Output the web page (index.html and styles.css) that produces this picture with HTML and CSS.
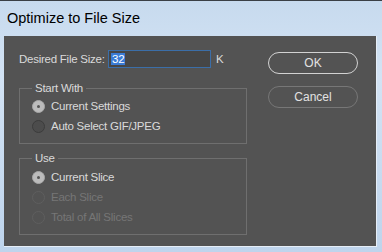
FILE: index.html
```html
<!DOCTYPE html>
<html lang="en">
<head>
    <meta charset="UTF-8">
    <title>Optimize to File Size</title>
    <link rel="stylesheet" href="styles.css">
</head>
<body>
    <div class="window">
        <div class="titlebar">Optimize to File Size</div>

        <div class="panel">
            <div class="main">
                <div class="size-row">
                    <label for="file_size">Desired File Size:</label>
                    <div class="size-input" id="file_size"><span class="selected">32</span></div>
                    <span class="unit">K</span>
                </div>

                <!-- Start With -->
                <fieldset class="group">
                    <legend>Start With</legend>
                    <div class="radio-row"><span class="radio checked"></span>Current Settings</div>
                    <div class="radio-row"><span class="radio"></span>Auto Select GIF/JPEG</div>
                </fieldset>

                <!-- Use -->
                <fieldset class="group group-use">
                    <legend>Use</legend>
                    <div class="radio-row"><span class="radio checked"></span>Current Slice</div>
                    <div class="radio-row disabled"><span class="radio"></span>Each Slice</div>
                    <div class="radio-row disabled"><span class="radio"></span>Total of All Slices</div>
                </fieldset>
            </div>

            <div class="buttons">
                <button class="btn btn-default">OK</button>
                <button class="btn">Cancel</button>
            </div>
        </div>
    </div>
</body>
</html>
```

FILE: styles.css
```css
body {
    margin: 0;
    font-family: "Liberation Sans", Arial, sans-serif;
}

.window {
    width: 382px;
    height: 252px;
    box-sizing: border-box;
    border-top: 1px solid #3a3f45;
    background: linear-gradient(to bottom, #c7daee 0%, #d3e3f4 30%, #bed4ec 100%);
    display: flex;
    flex-direction: column;
}

.titlebar {
    height: 35px;
    padding-left: 7px;
    font-size: 14.5px;
    line-height: 35px;
    color: #000;
}

.panel {
    margin: 0 5px 4px 4px;
    height: 211px;
    box-sizing: border-box;
    background-color: #535353;
    border-right: 1px solid #e6eef7;
    border-bottom: 1px solid #e6eef7;
    display: flex;
    justify-content: space-between;
    padding: 14px 18px 0 15px;
    color: #dadada;
    font-size: 11.5px;
    letter-spacing: -0.25px;
}

.main {
    width: 228px;
}

.size-row {
    display: flex;
    align-items: center;
    height: 18px;
    margin-bottom: 12px;
    white-space: nowrap;
}

.size-row label {
    width: 89px;
    flex-shrink: 0;
}

.size-input {
    width: 103px;
    height: 18px;
    flex-shrink: 0;
    box-sizing: border-box;
    border: 1px solid #3b6ea8;
    background-color: #464646;
    padding: 1px 2px;
    line-height: 14px;
}

.selected {
    background-color: #3a7bd5;
    color: #fff;
    padding: 0 1px;
}

.unit {
    margin-left: 5px;
}

.group {
    margin: 0;
    padding: 0 0 7px 12px;
    border: 1px solid #6f6f6f;
}

.group legend {
    padding: 0 3px;
    line-height: 16px;
}

.group-use {
    margin-top: 6px;
    padding-top: 1px;
    padding-bottom: 7px;
}

.radio-row {
    display: flex;
    align-items: center;
    height: 20px;
}

.radio {
    width: 11px;
    height: 11px;
    border-radius: 50%;
    border: 1px solid #3c3c3c;
    background-color: #4c4c4c;
    margin-right: 6px;
    position: relative;
}

.radio.checked {
    background-color: #bcbcbc;
    border-color: #a8a8a8;
}

.radio.checked::after {
    content: "";
    position: absolute;
    left: 4px;
    top: 4px;
    width: 3px;
    height: 3px;
    border-radius: 50%;
    background-color: #555;
}

.disabled {
    color: #767676;
}

.disabled .radio {
    background-color: #535353;
    border-color: #5f5f5f;
}

.buttons {
    width: 90px;
    padding-top: 2px;
    display: flex;
    flex-direction: column;
    gap: 12px;
}

.btn {
    height: 22px;
    border: 1px solid #777;
    border-radius: 11px;
    background: transparent;
    color: #e2e2e2;
    font-family: inherit;
    font-size: 12px;
    padding: 0;
}

.btn-default {
    border-color: #d2d2d2;
}
```
